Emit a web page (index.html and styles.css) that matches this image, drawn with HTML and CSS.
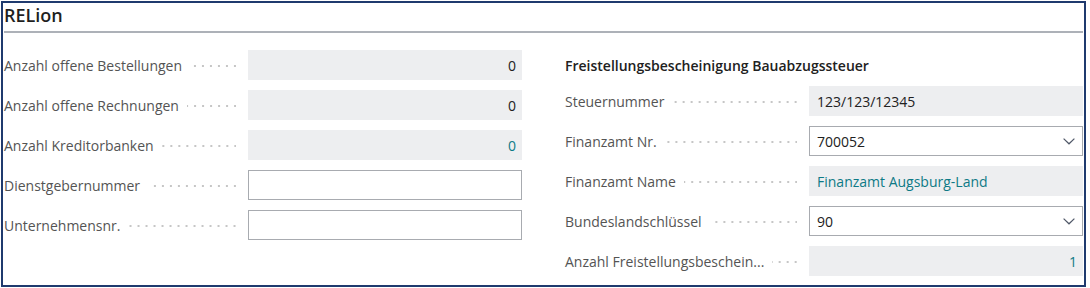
FILE: index.html
```html
<!DOCTYPE html>
<html lang="de">
<head>
  <meta charset="UTF-8">
  <title>RELion</title>
  <link rel="stylesheet" href="styles.css">
</head>
<body>

  <div class="frame">
    <h2 class="group-title">RELion</h2>

    <div class="columns">
      <!-- Left column -->
      <div class="column">
        <div class="field">
          <div class="label"><span>Anzahl offene Bestellungen</span></div>
          <div class="value num">0</div>
        </div>
        <div class="field">
          <div class="label"><span>Anzahl offene Rechnungen</span></div>
          <div class="value num">0</div>
        </div>
        <div class="field">
          <div class="label"><span>Anzahl Kreditorbanken</span></div>
          <div class="value num link">0</div>
        </div>
        <div class="field">
          <div class="label"><span>Dienstgebernummer</span></div>
          <div class="value input"></div>
        </div>
        <div class="field">
          <div class="label"><span>Unternehmensnr.</span></div>
          <div class="value input"></div>
        </div>
      </div>

      <!-- Right column -->
      <div class="column">
        <h3 class="sub-title">Freistellungsbescheinigung Bauabzugssteuer</h3>
        <div class="field">
          <div class="label"><span>Steuernummer</span></div>
          <div class="value">123/123/12345</div>
        </div>
        <div class="field">
          <div class="label"><span>Finanzamt Nr.</span></div>
          <div class="value input select">
            <span>700052</span>
            <svg class="chevron" width="12" height="7" viewBox="0 0 12 7"><polyline points="0.6,0.6 6,5.8 11.4,0.6" fill="none" stroke="#505868" stroke-width="1.2"/></svg>
          </div>
        </div>
        <div class="field">
          <div class="label"><span>Finanzamt Name</span></div>
          <div class="value link">Finanzamt Augsburg-Land</div>
        </div>
        <div class="field">
          <div class="label"><span>Bundeslandschlüssel</span></div>
          <div class="value input select">
            <span>90</span>
            <svg class="chevron" width="12" height="7" viewBox="0 0 12 7"><polyline points="0.6,0.6 6,5.8 11.4,0.6" fill="none" stroke="#505868" stroke-width="1.2"/></svg>
          </div>
        </div>
        <div class="field">
          <div class="label"><span>Anzahl Freistellungsbeschein...</span></div>
          <div class="value num link">1</div>
        </div>
      </div>
    </div>
  </div>

</body>
</html>
```

FILE: styles.css
```css
body {
  margin: 0;
  font-family: "Open Sans", "Noto Sans", sans-serif;
  background: #fff;
}
.frame {
  box-sizing: border-box;
  width: 1085px;
  height: 286px;
  margin: 1px 0 0 1px;
  padding: 0 1px;
  border: 2px solid #1f3a6e;
}
.group-title {
  margin: 0;
  padding-bottom: 4px;
  font-size: 18px;
  line-height: 24px;
  font-weight: 600;
  color: #1f1f1f;
  border-bottom: 2px solid #adb1b8;
}
.columns {
  display: grid;
  grid-template-columns: 518px 518px;
  column-gap: 43px;
  padding-top: 17px;
}
.sub-title {
  margin: 0 0 4px;
  font-size: 14px;
  line-height: 32px;
  font-weight: 600;
  color: #212121;
}
.field {
  display: flex;
  height: 30px;
  margin-bottom: 10px;
}
.label {
  display: flex;
  align-items: center;
  width: 244px;
  flex: none;
  font-size: 14px;
  color: #545454;
  white-space: nowrap;
}
.label::after {
  content: "";
  flex: 1;
  height: 2px;
  margin: 2px 12px 0 8px;
  background-image: linear-gradient(to right, transparent 0 6px, #c6c6c6 6px 8px);
  background-size: 8px 2px;
  background-repeat: repeat-x;
  background-position: right center;
}
.value {
  box-sizing: border-box;
  width: 274px;
  display: flex;
  align-items: center;
  padding: 0 8px;
  background: #edeef0;
  font-size: 14px;
  color: #212121;
}
.num {
  justify-content: flex-end;
  padding-right: 6px;
}
.link {
  color: #0e7a86;
}
.input {
  background: #fff;
  border: 1px solid #a8abb0;
  padding-left: 7px;
}
.select {
  justify-content: space-between;
  padding-right: 7px;
}
```
